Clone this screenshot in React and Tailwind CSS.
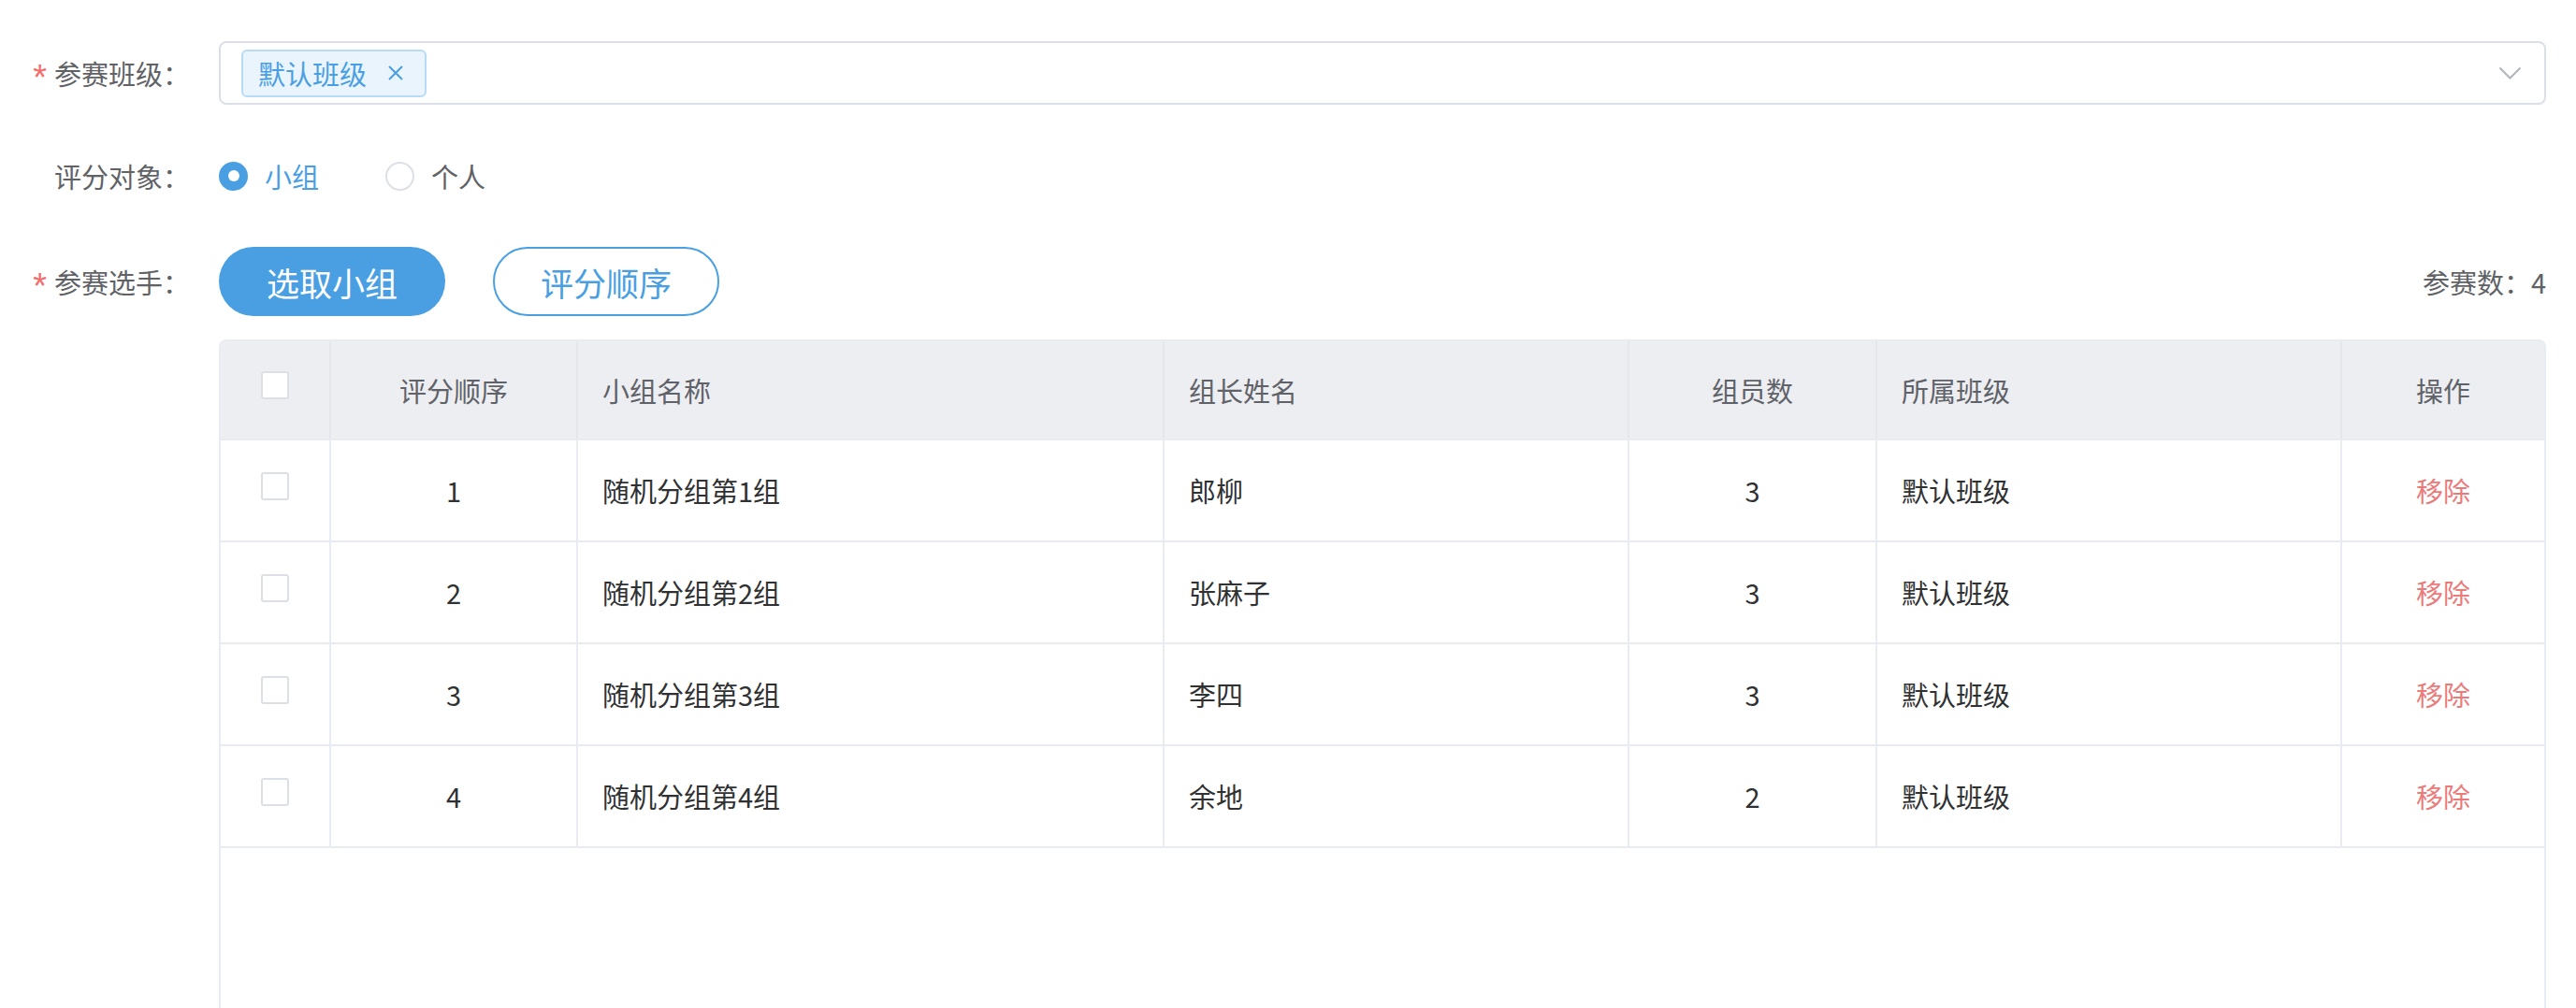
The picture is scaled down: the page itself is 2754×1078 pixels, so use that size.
import React from "react";

const rows = [
  { order: 1, name: "随机分组第1组", leader: "郎柳", count: 3, cls: "默认班级" },
  { order: 2, name: "随机分组第2组", leader: "张麻子", count: 3, cls: "默认班级" },
  { order: 3, name: "随机分组第3组", leader: "李四", count: 3, cls: "默认班级" },
  { order: 4, name: "随机分组第4组", leader: "余地", count: 2, cls: "默认班级" },
];

const cols = "grid grid-cols-[118px_264px_627px_497px_265px_497px_1fr]";

function Label({ text, required }) {
  return (
    <div className="w-[234px] shrink-0 flex items-center justify-end pr-[31px] text-[#606266]">
      {required && (
        <span
          className="text-[#f56c6c] text-[38px] mr-[8px] relative top-[5px]"
          style={{ fontFamily: '"Liberation Sans", sans-serif' }}
        >
          *
        </span>
      )}
      <span>{text}</span>
    </div>
  );
}

function Checkbox() {
  return <div className="w-[30px] h-[30px] bg-white border-2 border-[#dcdfe6] rounded-[3px] mb-[10px]" />;
}

export default function App() {
  return (
    <div
      className="w-full min-h-screen bg-white text-[29px] leading-none overflow-hidden"
      style={{ fontFamily: '"Noto Sans CJK SC", "Noto Sans", sans-serif' }}
    >
      <div className="pt-[44px] pr-[32px]">
        {/* Row 1 */}
        <div className="flex items-center h-[68px]">
          <Label text="参赛班级：" required />
          <div className="flex-1 h-[68px] border-2 border-[#dcdfe6] rounded-[8px] flex items-center pl-[22px] pr-[24px]">
            <div className="h-[51px] flex items-center border-2 border-[#b8dbf5] bg-[#e9f4fd] rounded-[6px] pl-[16px] pr-[22px] text-[#4a9fe3]">
              <span>默认班级</span>
              <svg className="ml-[22px]" width="18" height="18" viewBox="0 0 18 18">
                <path d="M2 2L16 16M16 2L2 16" stroke="#4a9fe3" strokeWidth="2" fill="none" />
              </svg>
            </div>
            <div className="flex-1" />
            <svg width="25" height="15" viewBox="0 0 25 15">
              <path d="M1.5 1.5L12.5 12.5L23.5 1.5" stroke="#b1b4b9" strokeWidth="2" fill="none" />
            </svg>
          </div>
        </div>

        {/* Row 2 */}
        <div className="flex items-center h-[68px] mt-[42px]">
          <Label text="评分对象：" />
          <div className="flex items-center">
            <div className="w-[31px] h-[31px] rounded-full bg-[#4a9fe3] flex items-center justify-center">
              <div className="w-[12px] h-[12px] rounded-full bg-white" />
            </div>
            <span className="ml-[18px] text-[#4a9fe3]">小组</span>
            <div className="ml-[71px] w-[31px] h-[31px] rounded-full bg-white border-2 border-[#dcdfe6]" />
            <span className="ml-[18px] text-[#606266]">个人</span>
          </div>
        </div>

        {/* Row 3 */}
        <div className="flex items-center h-[74px] mt-[42px]">
          <Label text="参赛选手：" required />
          <button className="w-[242px] h-[74px] rounded-full bg-[#4a9fe3] text-white text-[35px]">选取小组</button>
          <button className="ml-[51px] w-[242px] h-[74px] rounded-full bg-white border-2 border-[#4a9fe3] text-[#4a9fe3] text-[35px]">
            评分顺序
          </button>
          <div className="ml-auto text-[#606266]">参赛数：4</div>
        </div>

        {/* Table */}
        <div className="ml-[234px] mt-[25px] border-2 border-b-0 border-[#e8ebf1] rounded-t-[8px] overflow-hidden">
          <div className={`${cols} h-[106px] bg-[#edeef1] border-b-2 border-[#e8ebf1] text-[#5f6268]`}>
            <div className="flex items-center justify-center border-r-2 border-[#e5e7eb]">
              <Checkbox />
            </div>
            <div className="flex items-center justify-center border-r-2 border-[#e5e7eb]">评分顺序</div>
            <div className="flex items-center pl-[26px] border-r-2 border-[#e5e7eb]">小组名称</div>
            <div className="flex items-center pl-[26px] border-r-2 border-[#e5e7eb]">组长姓名</div>
            <div className="flex items-center justify-center border-r-2 border-[#e5e7eb]">组员数</div>
            <div className="flex items-center pl-[26px] border-r-2 border-[#e5e7eb]">所属班级</div>
            <div className="flex items-center justify-center">操作</div>
          </div>
          {rows.map((r) => (
            <div key={r.order} className={`${cols} h-[109px] border-b-2 border-[#e8ebf1] text-[#303133]`}>
              <div className="flex items-center justify-center border-r-2 border-[#e8ebf1]">
                <Checkbox />
              </div>
              <div className="flex items-center justify-center border-r-2 border-[#e8ebf1]">{r.order}</div>
              <div className="flex items-center pl-[26px] border-r-2 border-[#e8ebf1]">{r.name}</div>
              <div className="flex items-center pl-[26px] border-r-2 border-[#e8ebf1]">{r.leader}</div>
              <div className="flex items-center justify-center border-r-2 border-[#e8ebf1]">{r.count}</div>
              <div className="flex items-center pl-[26px] border-r-2 border-[#e8ebf1]">{r.cls}</div>
              <div className="flex items-center justify-center text-[#eb7a7a]">移除</div>
            </div>
          ))}
          <div className="h-[300px]" />
        </div>
      </div>
    </div>
  );
}
